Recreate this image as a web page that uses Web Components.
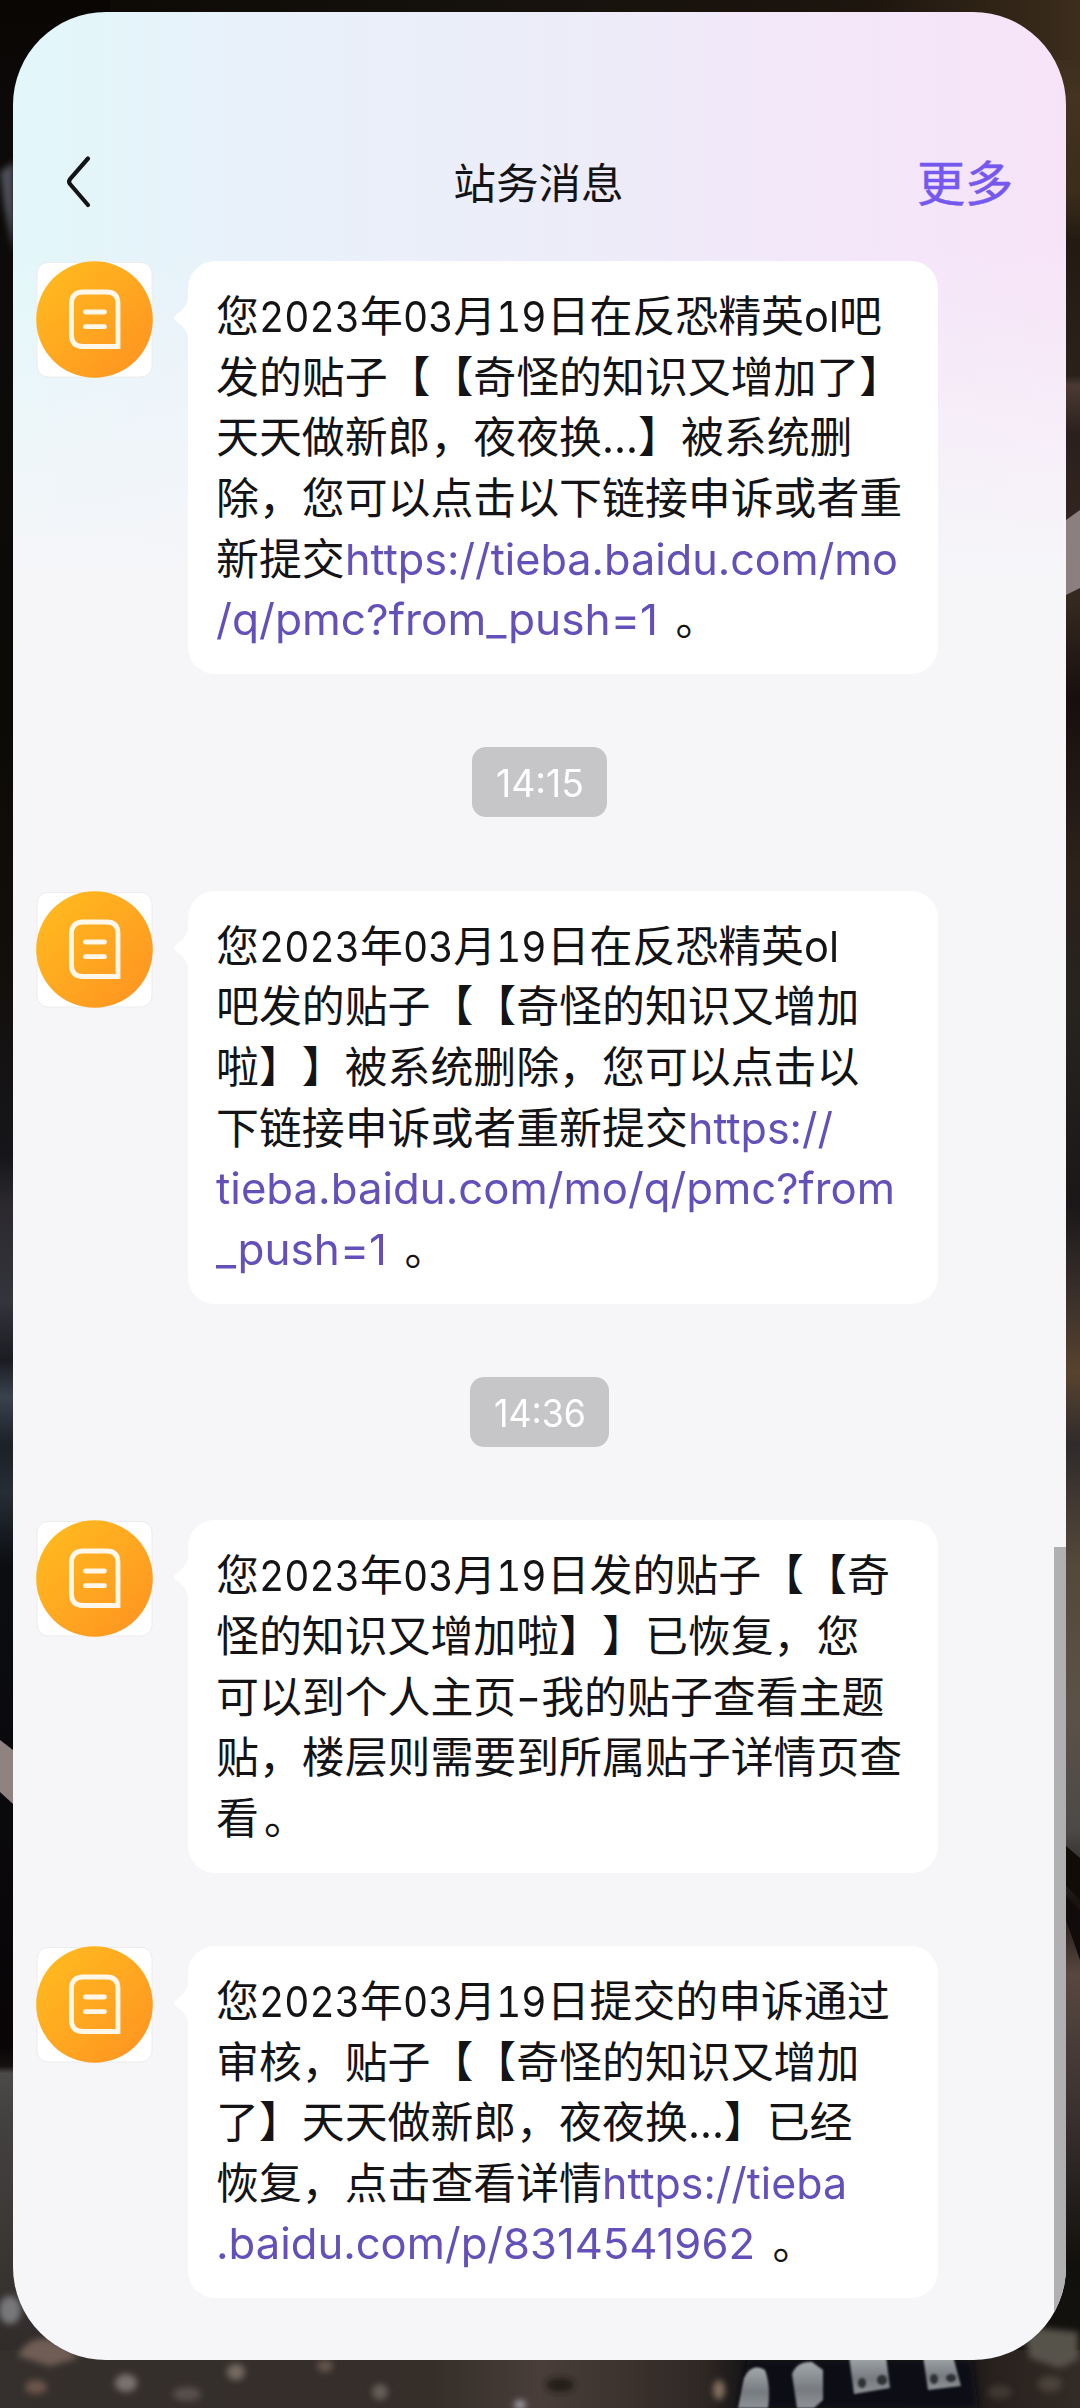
<!DOCTYPE html>
<html lang="zh-CN">
<head>
<meta charset="utf-8">
<title>站务消息</title>
<style>
html,body{margin:0;padding:0}
body{width:1080px;height:2408px;overflow:hidden;background:#15110f}
</style>
</head>
<body>
<wall-paper>
  <chat-window>
    <nav-bar slot="header" heading="站务消息" action="更多"></nav-bar>
    <chat-message lines="您{2023:101}年{03:50.5}月{19:50.5}日在反恐精英{ol:35}吧|发的贴子【【奇怪的知识又增加了】|天天做新郎，夜夜换{...:36}】被系统删|除，您可以点击以下链接申诉或者重|新提交[https://tieba.baidu.com/mo:553]|[/q/pmc?from_push=1:442] 。"></chat-message>
    <time-chip width="135" text="88">14:15</time-chip>
    <chat-message lines="您{2023:101}年{03:50.5}月{19:50.5}日在反恐精英{ol:35}|吧发的贴子【【奇怪的知识又增加|啦】】被系统删除，您可以点击以|下链接申诉或者重新提交[https://:145]|[tieba.baidu.com/mo/q/pmc?from:679]|[_push=1:171] 。"></chat-message>
    <time-chip width="139" text="92">14:36</time-chip>
    <chat-message lines="您{2023:101}年{03:50.5}月{19:50.5}日发的贴子【【奇|怪的知识又增加啦】】已恢复，您|可以到个人主页{-:25}我的贴子查看主题|贴，楼层则需要到所属贴子详情页查|看。"></chat-message>
    <chat-message lines="您{2023:101}年{03:50.5}月{19:50.5}日提交的申诉通过|审核，贴子【【奇怪的知识又增加|了】天天做新郎，夜夜换{...:36}】已经|恢复，点击查看详情[https://tieba:245]|[.baidu.com/p/8314541962:539] 。"></chat-message>
  </chat-window>
</wall-paper>
<script>
const CJK = '"Noto Sans CJK SC", "Noto Sans", sans-serif';
const LATIN = 'Inter, "Noto Sans CJK SC", sans-serif';

// Stretches a run of latin text to a given advance width.
function fitRun(el) {
  const target = parseFloat(el.dataset.w);
  const natural = el.getBoundingClientRect().width;
  el.style.transform = 'scaleX(' + (target / natural) + ')';
  el.style.width = natural + 'px';
  el.style.marginRight = (target - natural) + 'px';
}

class WallPaper extends HTMLElement {
  connectedCallback() {
    const root = this.attachShadow({mode: 'open'});
    root.innerHTML = `
    <style>
      :host{display:block;position:relative;width:1080px;height:2408px;overflow:hidden;background:#2a2523}
      svg{position:absolute;inset:0}
      .stage{position:relative;box-sizing:border-box;height:2408px;padding:12px 14px 48px 13px}
    </style>
    <svg width="1080" height="2408" viewBox="0 0 1080 2408">
      <defs>
        <linearGradient id="top"><stop offset="0" stop-color="#0b0805"/><stop offset=".45" stop-color="#15110c"/><stop offset=".8" stop-color="#1d150e"/><stop offset="1" stop-color="#3c2d1c"/></linearGradient>
        <linearGradient id="l" x1="0" y1="0" x2="0" y2="2408" gradientUnits="userSpaceOnUse">
          <stop offset="0" stop-color="#090604"/><stop offset=".06" stop-color="#0d0b0a"/><stop offset=".3" stop-color="#0c0a07"/><stop offset=".4" stop-color="#120e0b"/><stop offset=".48" stop-color="#16161a"/><stop offset=".5" stop-color="#2b292e"/><stop offset=".54" stop-color="#34343c"/><stop offset=".565" stop-color="#1b1c22"/><stop offset=".58" stop-color="#3a424d"/><stop offset=".6" stop-color="#1c2027"/><stop offset=".62" stop-color="#272d35"/><stop offset=".65" stop-color="#0b0d11"/><stop offset=".85" stop-color="#090507"/><stop offset=".858" stop-color="#151110"/><stop offset=".861" stop-color="#4b4a48"/><stop offset=".88" stop-color="#434140"/><stop offset=".93" stop-color="#3b3735"/><stop offset="1" stop-color="#2b2625"/>
        </linearGradient>
        <linearGradient id="r" x1="0" y1="0" x2="0" y2="2408" gradientUnits="userSpaceOnUse">
          <stop offset="0" stop-color="#32271a"/><stop offset=".04" stop-color="#433320"/><stop offset=".08" stop-color="#3b2d1a"/><stop offset=".1" stop-color="#241a13"/><stop offset=".156" stop-color="#2a211b"/><stop offset=".16" stop-color="#4a3a33"/><stop offset=".18" stop-color="#2c201d"/><stop offset=".25" stop-color="#35291f"/><stop offset=".29" stop-color="#160f0e"/><stop offset=".36" stop-color="#2b221a"/><stop offset=".42" stop-color="#27231f"/><stop offset=".5" stop-color="#1b1718"/><stop offset=".53" stop-color="#322b28"/><stop offset=".57" stop-color="#58432f"/><stop offset=".6" stop-color="#2f2b2b"/><stop offset=".65" stop-color="#544839"/><stop offset=".71" stop-color="#5b5247"/><stop offset=".76" stop-color="#4c4947"/><stop offset=".79" stop-color="#171210"/><stop offset=".82" stop-color="#58473f"/><stop offset=".88" stop-color="#38302f"/><stop offset=".94" stop-color="#12100c"/><stop offset=".965" stop-color="#13110d"/><stop offset="1" stop-color="#29221e"/>
        </linearGradient>
        <linearGradient id="b"><stop offset="0" stop-color="#35302d"/><stop offset=".4" stop-color="#352e29"/><stop offset=".5" stop-color="#493e39"/><stop offset=".65" stop-color="#302824"/><stop offset=".7" stop-color="#101114"/><stop offset=".88" stop-color="#121214"/><stop offset=".92" stop-color="#28211d"/><stop offset="1" stop-color="#332b25"/></linearGradient>
        <linearGradient id="m" x1="0" y1="0" x2="0" y2="1"><stop offset="0" stop-color="#a3a8ab"/><stop offset=".6" stop-color="#777b80"/><stop offset="1" stop-color="#8f9396"/></linearGradient>
        <filter id="s"><feGaussianBlur stdDeviation="3"/></filter>
        <filter id="t"><feGaussianBlur stdDeviation="1.1"/></filter>
      </defs>
      <rect width="1080" height="110" fill="url(#top)"/>
      <rect width="110" height="2408" fill="url(#l)"/>
      <rect x="970" y="60" width="110" height="2348" fill="url(#r)"/>
      <path d="M0 172 14 162V252L4 205Z" fill="#4b5059" filter="url(#s)"/>
      <path d="M0 1740 13 1750V1804L0 1792Z" fill="#8e8380"/>
      <path d="M1066 520 1080 510V588L1066 595Z" fill="#8b7f80"/>
      <path d="M1066 1846 1080 1858V1900L1066 1886Z" fill="#120c09"/>
      <path d="M1066 1896 1080 1910V1960L1066 1920Z" fill="#120b0b"/>
      <rect x="0" y="2350" width="1080" height="58" fill="url(#b)"/>
      <g filter="url(#s)">
        <path d="M18 2356C30 2330 60 2335 78 2358L50 2366Z" fill="#6f5d55"/>
        <ellipse cx="10" cy="2310" rx="11" ry="14" fill="#77777a"/>
        <ellipse cx="126" cy="2383" rx="11" ry="9" fill="#7a726e"/>
        <ellipse cx="36" cy="2387" rx="11" ry="7" fill="#6c5549"/>
        <ellipse cx="236" cy="2372" rx="9" ry="8" fill="#746b62"/>
        <ellipse cx="187" cy="2394" rx="14" ry="7" fill="#59504b"/>
        <ellipse cx="325" cy="2366" rx="8" ry="6" fill="#65574e"/>
        <ellipse cx="380" cy="2392" rx="8" ry="8" fill="#655d57"/>
        <ellipse cx="560" cy="2385" rx="14" ry="7" fill="#211a16"/>
        <ellipse cx="520" cy="2405" rx="6" ry="5" fill="#9e9aa0"/>
        <ellipse cx="719" cy="2390" rx="6" ry="10" fill="#83705f"/>
        <path d="M748 2360H972L978 2408H738Z" fill="#0e0f12"/>
        <path d="M1025 2336 1040 2328 1078 2332V2360L1060 2368 1030 2358Z" fill="#57524c"/>
        <ellipse cx="1000" cy="2392" rx="12" ry="7" fill="#403832"/>
        <ellipse cx="1050" cy="2384" rx="12" ry="8" fill="#4c433b"/>
      </g>
      <g fill="url(#m)" filter="url(#t)">
        <path d="M744 2378Q752 2362 765 2370Q771 2385 768 2408H738Z"/>
        <path d="M792 2374Q797 2361 812 2362L823 2370V2400L814 2408H797Z"/>
        <path d="M849 2356H886L890 2388 854 2394Z"/>
        <path d="M923 2356H953L961 2386 928 2390Z"/>
      </g>
      <g fill="#2e3135" filter="url(#t)"><ellipse cx="862" cy="2383" rx="4" ry="5"/><ellipse cx="882" cy="2380" rx="5" ry="5"/><ellipse cx="934" cy="2379" rx="4" ry="5"/><ellipse cx="951" cy="2378" rx="5" ry="4"/></g>
    </svg>
    <div class="stage"><slot></slot></div>`;
  }
}

class ChatWindow extends HTMLElement {
  connectedCallback() {
    const root = this.attachShadow({mode: 'open'});
    root.innerHTML = `
    <style>
      :host{display:block;position:relative;box-sizing:border-box;height:2348px;border-radius:93px;overflow:hidden;
        background:linear-gradient(180deg,rgba(246,246,249,0) 0,rgba(246,246,249,0) 235px,#f6f6f9 565px),
        linear-gradient(90deg,#e2f7fa 0,#e8f1fa 22%,#ecedf9 50%,#f3e7f9 76%,#f7e3f8 100%)}
      .list{display:flex;flex-direction:column;gap:73.2px;padding:0 0 0 23px}
      .bar{position:absolute;right:0;top:1535px;width:12px;bottom:0;background:#b0b0b2}
    </style>
    <slot name="header"></slot>
    <div class="list"><slot></slot></div>
    <div class="bar"></div>`;
  }
}

class NavBar extends HTMLElement {
  connectedCallback() {
    const root = this.attachShadow({mode: 'open'});
    root.innerHTML = `
    <style>
      :host{display:grid;grid-template-columns:1fr auto 1fr;align-items:center;height:157px;padding:92px 53px 0 51px;
        font-family:${CJK};color:#141416}
      h1{margin:0;font-size:42.6px;font-weight:400;line-height:153px;padding-bottom:4px}
      svg{display:block;margin-bottom:2px}
      b{justify-self:end;font-size:48px;font-weight:400;color:#7559ee;line-height:153px;padding-bottom:4px;-webkit-text-stroke:.5px #7559ee}
    </style>
    <svg width="32" height="56" viewBox="0 0 32 56" fill="none" stroke="#141416" stroke-width="4.2" stroke-linecap="round" stroke-linejoin="round"><path d="M24 4.5 6 25.2Q4.2 27.6 6 30L24 51"/></svg>
    <h1>${this.getAttribute('heading')}</h1>
    <b>${this.getAttribute('action')}</b>`;
  }
}

class SystemAvatar extends HTMLElement {
  connectedCallback() {
    const root = this.attachShadow({mode: 'open'});
    root.innerHTML = `
    <style>:host{display:block;width:117px;height:117px;flex:none}svg{display:block}</style>
    <svg width="117" height="117" viewBox="0 0 117 117">
      <defs><linearGradient id="g" x1=".1" y1=".1" x2=".9" y2=".9"><stop offset="0" stop-color="#ffb91f"/><stop offset="1" stop-color="#ff9621"/></linearGradient></defs>
      <rect x="1" y="1.5" width="115" height="114.5" rx="11" fill="#fff" stroke="#ececee" stroke-width="1"/>
      <circle cx="58.5" cy="58.5" r="58.3" fill="url(#g)"/>
      <g fill="none" stroke="#fff8ea" stroke-width="4.8">
        <path d="M82 85.5H47Q35.5 85.5 35.5 74V42.5Q35.5 31 47 31H70.5Q82 31 82 42.5Z"/>
        <path d="M49.5 51H68.5M49.5 65.7H68.5" stroke-linecap="round"/>
      </g>
    </svg>`;
  }
}

class ChatMessage extends HTMLElement {
  connectedCallback() {
    const root = this.attachShadow({mode: 'open'});
    const lines = this.getAttribute('lines').split('|').map(l => {
      const html = l.replace(/\{([^}]*):([\d.]+)\}|\[([^\]]*):([\d.]+)\]/g, (m, a, aw, b, bw) =>
        b ? `<a class="run" data-w="${bw}">${b}</a>` : `<span class="run${/\d/.test(a) ? ' num' : ''}" data-w="${aw}">${a}</span>`)
        .replace('。', '<span class="stop">。</span>');
      return `<div class="line">${html}</div>`;
    }).join('');
    root.innerHTML = `
    <style>
      :host{display:flex;align-items:flex-start;gap:20px}
      .row{display:flex}
      .tail{display:block;flex:none;margin-top:32px;width:16px;height:50px;margin-right:-1px}
      .bubble{box-sizing:border-box;width:750px;padding:22.3px 28px 27.3px;border-radius:27px;background:#fff;
        font:400 42.9px/60.6px ${CJK};color:#141416;text-spacing-trim:space-all}
      .line{height:60.6px;white-space:pre}
      .run{display:inline-block;transform-origin:0 50%;font-family:${LATIN};font-size:43px;font-weight:370;line-height:1}
      .num{font-variant-numeric:tabular-nums}
      .stop{padding-left:5px}
      a + .stop{padding-left:8px}
      a{color:#6450b8}
    </style>
    <system-avatar></system-avatar>
    <div class="row">
      <svg class="tail" viewBox="0 0 16 50"><path d="M16 1Q15 12 8 18L1.5 23.3Q.5 25 1.5 26.7L8 32Q15 38 16 49Z" fill="#fff"/></svg>
      <div class="bubble">${lines}</div>
    </div>`;
    root.querySelectorAll('.run').forEach(fitRun);
  }
}

class TimeChip extends HTMLElement {
  connectedCallback() {
    const root = this.attachShadow({mode: 'open'});
    root.innerHTML = `
    <style>
      :host{display:flex;justify-content:center;padding-right:23px}
      .chip{display:flex;justify-content:center;align-items:center;width:${this.getAttribute('width')}px;height:70px;border-radius:14px;background:#c6c6c8;
        color:#fff;font:400 37.5px/66px ${LATIN};white-space:pre}
      .run{display:block;padding-top:4px;transform-origin:0 50%}
    </style>
    <div class="chip"><span class="run" data-w="${this.getAttribute('text')}">${this.textContent}</span></div>`;
    root.querySelectorAll('.run').forEach(fitRun);
  }
}

customElements.define('system-avatar', SystemAvatar);
customElements.define('wall-paper', WallPaper);
customElements.define('chat-window', ChatWindow);
customElements.define('nav-bar', NavBar);
customElements.define('chat-message', ChatMessage);
customElements.define('time-chip', TimeChip);
</script>
</body>
</html>
